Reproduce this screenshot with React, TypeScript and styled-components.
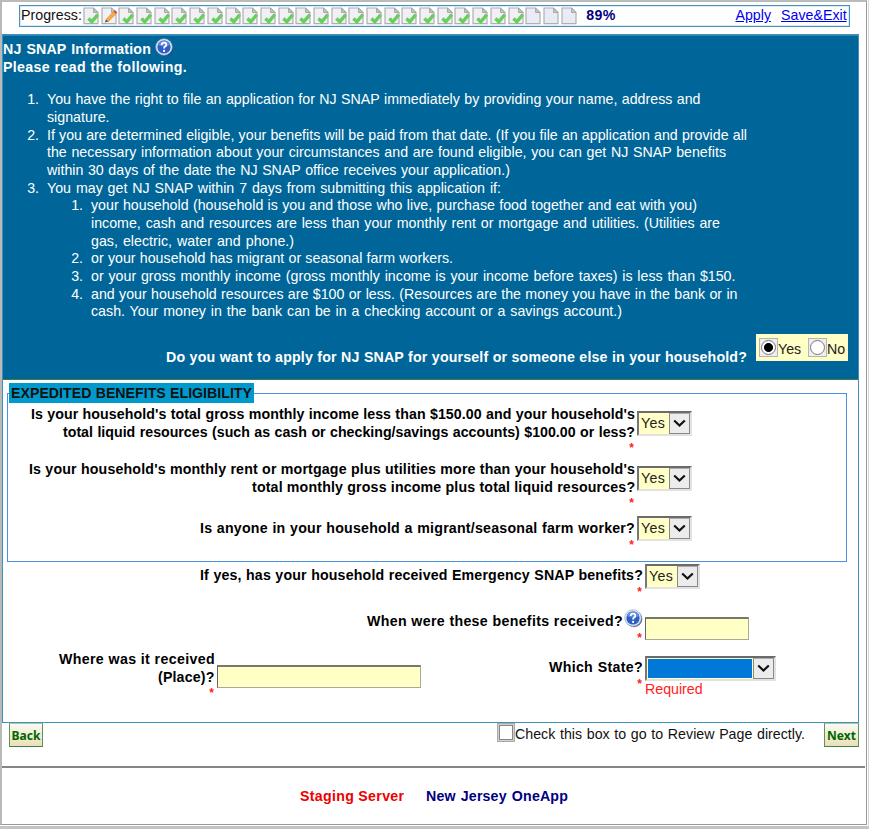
import React from "react";
import styled, { createGlobalStyle } from "styled-components";

const GlobalStyle = createGlobalStyle`
  * { box-sizing: border-box; }
  body { margin: 0; background: #fff; font-family: "Liberation Sans", Arial, sans-serif; font-size: 14.2px; line-height: 17.67px; color: #111; }
`;

const Page = styled.div`
  width: 869px;
  height: 829px;
  padding-bottom: 2px;
  border-bottom: 3px solid #c4c4c4;
  border-right: 1px solid #d8d8d8;
  background: #fff;
`;

const Frame = styled.div`
  height: 825px;
  width: 867px;
  border: 1px solid #999;
  border-left: 2px solid #b9b9b9;
  border-top: 2px solid #bbb;
  display: flex;
  flex-direction: column;
`;

const ProgressBar = styled.div`
  margin: 3px 0 0 17px;
  width: 831px;
  height: 22px;
  padding-left: 1px;
  border: 1px solid #4695bd;
  outline: 1px solid #dcebf2;
  outline-offset: -2px;
  display: flex;
  align-items: center;
  flex: none;
`;

const Steps = styled.div`
  display: flex;
  margin-left: 1px;
`;

const StepIcon = styled.svg`
  width: 17.7px;
  height: 18px;
  flex: none;
`;

const Percent = styled.b`
  margin-left: 8px;
  color: #000080;
  letter-spacing: 0.3px;
`;

const Links = styled.div`
  display: flex;
  gap: 10px;
  margin-left: auto;
  padding-right: 2px;
`;

const Link = styled.a`
  color: #0000f0;
  text-decoration: underline;
  text-underline-offset: 1px;
`;

const Line = styled.div<{ $w: number; $bold?: boolean; $ls?: number }>`
  width: ${(p) => p.$w}px;
  white-space: nowrap;
  text-align: justify;
  text-align-last: justify;
  letter-spacing: ${(p) => p.$ls ?? (p.$bold ? 0.16 : 0.02)}px;
  font-weight: ${(p) => (p.$bold ? 700 : 400)};
`;

const Panel = styled.main`
  margin-top: 7px;
  width: 857px;
  height: 689px;
  border: 1px solid #3f92bd;
  flex: none;
`;

const Info = styled.section`
  height: 345px;
  background: #006699;
  border-bottom: 1px solid #3f7d3f;
  border-top: 1px solid #2f83ae;
  color: #fff;
  padding-top: 4px;
`;

const HeadRow = styled.div`
  display: flex;
  gap: 4px;
  height: 19px;
  padding-top: 1px;
`;

const HelpIcon = styled.svg<{ $up: number }>`
  width: 19px;
  height: 19px;
  flex: none;
  margin-top: ${(p) => -p.$up}px;
`;

const List = styled.ol<{ $nested?: boolean }>`
  margin: ${(p) => (p.$nested ? "0" : "14.7px 0 0")};
  padding: 0 0 0 44px;
  list-style: none;
`;

const Item = styled.li`
  display: grid;
  grid-template-columns: 44px 1fr;
  margin-left: -44px;
`;

const Num = styled.span`
  text-align: right;
  padding-right: 8px;
`;

const AskRow = styled.div`
  display: flex;
  margin: 13px 0 0 163px;
`;

const AskText = styled.div`
  padding-top: 15px;
`;

const Choices = styled.div`
  margin-left: 9px;
  width: 92px;
  height: 27px;
  background: #ffffc6;
  display: flex;
  align-items: center;
  padding-left: 3px;
  color: #222;
`;

const RadioBox = styled.span`
  width: 19px;
  height: 19px;
  border: 1px solid #b4b4b4;
  background: #eee;
  display: flex;
  align-items: center;
  justify-content: center;
  flex: none;
`;

const Dot = styled.span<{ $on?: boolean }>`
  width: 15px;
  height: 15px;
  border-radius: 50%;
  border: 1px solid #777;
  background: ${(p) => (p.$on ? "radial-gradient(circle, #000 0 4px, #fff 5px)" : "#fff")};
`;

const ChoiceText = styled.span<{ $w: number }>`
  width: ${(p) => p.$w}px;
  padding-top: 4px;
`;

const Group = styled.fieldset`
  margin: 3px 0 0 4px;
  width: 840px;
  height: 179px;
  padding: 0;
  border: 1px solid #4a90e2;
  min-width: 0;
`;

const Legend = styled.legend`
  margin-left: 1px;
  padding: 0 2px;
  width: 245px;
  height: 20px;
  line-height: 21px;
  background: #0099cc;
  color: #111;
`;

const Row = styled.div<{ $h: number; $label: number }>`
  height: ${(p) => p.$h}px;
  display: grid;
  grid-template-columns: ${(p) => p.$label}px 1fr;
  column-gap: 2px;
`;

const Label = styled.div<{ $top: number }>`
  display: flex;
  flex-direction: column;
  align-items: flex-end;
  padding-top: ${(p) => p.$top}px;
  color: #000;
`;

const WithHelp = styled.div`
  display: flex;
  gap: 1px;
`;

const Star = styled.span`
  color: #f22;
  font-size: 12px;
  font-weight: 700;
  line-height: 14px;
  height: 14px;
  padding-right: 1px;
`;

const Control = styled.div<{ $top: number }>`
  padding-top: ${(p) => p.$top}px;
`;

const Select = styled.div<{ $w: number }>`
  width: ${(p) => p.$w}px;
  height: 25px;
  border-style: solid;
  border-width: 2px;
  border-color: #6b6b6b #e2e2e2 #e2e2e2 #777;
  background: #ffffc6;
  display: flex;
`;

const Value = styled.span<{ $blue?: boolean }>`
  flex: 1;
  padding: 2px 0 0 2px;
  letter-spacing: 0.4px;
  color: #222;
  margin: ${(p) => (p.$blue ? "1px 1px 1px 1px" : "0")};
  background: ${(p) => (p.$blue ? "#0078d7" : "transparent")};
`;

const Arrow = styled.span`
  width: 21px;
  height: 21px;
  border: 1px solid #888;
  border-top-color: #aaa;
  background: #ececec;
  display: flex;
  align-items: center;
  justify-content: center;
`;

const Input = styled.input<{ $w: number }>`
  display: block;
  width: ${(p) => p.$w}px;
  height: 23px;
  border: 1px solid #aaa896;
  border-top: 2px solid #77776a;
  border-left-color: #666;
  background: #ffffc6;
  outline: none;
`;

const LastRow = styled.div`
  display: grid;
  grid-template-columns: 212px 213px 211px 1fr;
  column-gap: 2px;
`;

const Required = styled.div`
  color: #f22;
`;

const Nav = styled.div`
  display: flex;
  height: 43px;
  padding-left: 7px;
  flex: none;
`;

const NavButton = styled.button<{ $w: number }>`
  width: ${(p) => p.$w}px;
  height: 24px;
  padding: 0;
  border: 1px solid #5c945c;
  border-top-color: #a9c7a9;
  border-bottom-color: #438043;
  background: linear-gradient(#fafaf2, #eadfb8);
  color: #006600;
  font: 700 12px "Noto Sans", sans-serif;
  white-space: nowrap;
`;

const Review = styled.label`
  margin-left: 454px;
  width: 327px;
  display: flex;
`;

const Check = styled.span`
  width: 18px;
  height: 19px;
  border: 2px solid #d0d0d0;
  background: #fff;
  box-shadow: inset 0 0 0 1px #888;
  outline: 1px solid #aaa;
  outline-offset: -1px;
`;

const ReviewText = styled.div`
  padding-top: 3px;
`;

const Rule = styled.div`
  height: 2px;
  margin-right: 1px;
  background: #858585;
`;

const Footer = styled.footer`
  display: flex;
  gap: 22px;
  padding: 20px 0 0 298px;
`;

const Tinted = styled.div<{ $c: string }>`
  color: ${(p) => p.$c};
`;

function Step({ kind }: { kind: "done" | "edit" | "blank" }) {
  return (
    <StepIcon viewBox="0 0 17.7 18">
      <path d="M1 1H10.5L15 5.5V16.7H1Z" fill={kind === "blank" ? "#e9ecf6" : "#f0f0f5"} stroke="#b0b0b0" strokeWidth="1.2" />
      <path d="M10.5 1V5.5H15Z" fill="#c4c4c4" stroke="#aaa" />
      {kind === "done" && <path d="M5.4 11.6 8.8 14.8 14.8 7.6" fill="none" stroke="#68cf5c" strokeWidth="3.4" />}
      {kind === "edit" && (
        <>
          <path d="M5 12.5 12.5 4.5 15 7 7.5 14.5Z" fill="#f4ac45" stroke="#d58b35" strokeWidth=".5" />
          <path d="M12.5 4.5 13.8 3 16.2 5.2 15 7Z" fill="#c94c4c" />
          <path d="M5 12.5 3.8 15.4 7.5 14.5Z" fill="#555" />
        </>
      )}
    </StepIcon>
  );
}

function Help({ up }: { up: number }) {
  return (
    <HelpIcon $up={up} viewBox="0 0 19 19">
      <circle cx="10" cy="10" r="8.3" fill="#273c5e" opacity=".75" />
      <circle cx="9" cy="9" r="8.3" fill="#dbe5f6" stroke="#8ea5ca" strokeWidth=".6" />
      <circle cx="9" cy="9" r="6.6" fill="#2d5fc4" />
      <path d="M3 7A6.3 6.3 0 0 1 15 7Q9 10 3 7Z" fill="#638ade" />
      <path d="M6.6 7Q6.8 4.6 9.1 4.7 11.5 4.8 11.3 6.8 11.2 7.9 9.8 8.8 9.1 9.3 9.1 10.6" fill="none" stroke="#fff" strokeWidth="1.8" />
      <circle cx="9.1" cy="12.9" r="1.1" fill="#fff" />
    </HelpIcon>
  );
}

function Drop({ w, value }: { w: number; value?: string }) {
  return (
    <Select $w={w}>
      <Value $blue={!value}>{value}</Value>
      <Arrow>
        <svg width="13" height="9" viewBox="0 0 13 9">
          <path d="M1.2 1.5 6.5 6.5 11.8 1.5" fill="none" stroke="#111" strokeWidth="2.2" />
        </svg>
      </Arrow>
    </Select>
  );
}

const steps = Array.from({ length: 28 }, (_, i) => (i === 1 ? "edit" : i > 24 ? "blank" : "done") as "done" | "edit" | "blank");

type Entry = [string, number][];

const rights: Entry[] = [
  [["You have the right to file an application for NJ SNAP immediately by providing your name, address and", 653.5], ["signature.", 62]],
  [
    ["If you are determined eligible, your benefits will be paid from that date. (If you file an application and provide all", 700],
    ["the necessary information about your circumstances and are found eligible, you can get NJ SNAP benefits", 679],
    ["within 30 days of the date the NJ SNAP office receives your application.)", 463],
  ],
  [["You may get NJ SNAP within 7 days from submitting this application if:", 454]],
];

const conditions: Entry[] = [
  [
    ["your household (household is you and those who live, purchase food together and eat with you)", 606],
    ["income, cash and resources are less than your monthly rent or mortgage and utilities. (Utilities are", 629],
    ["gas, electric, water and phone.)", 203],
  ],
  [["or your household has migrant or seasonal farm workers.", 362]],
  [["or your gross monthly income (gross monthly income is your income before taxes) is less than $150.", 644.5]],
  [
    ["and your household resources are $100 or less. (Resources are the money you have in the bank or in", 646.5],
    ["cash. Your money in the bank can be in a checking account or a savings account.)", 531],
  ],
];

function Entries({ items, nested, children }: { items: Entry[]; nested?: boolean; children?: React.ReactNode }) {
  return (
    <List $nested={nested}>
      {items.map((lines, i) => (
        <Item key={i}>
          <Num>{i + 1}.</Num>
          <div>
            {lines.map(([t, w]) => (
              <Line key={t} $w={w}>{t}</Line>
            ))}
            {i === items.length - 1 && children}
          </div>
        </Item>
      ))}
    </List>
  );
}

export default function App() {
  return (
    <>
      <GlobalStyle />
      <Page>
        <Frame>
          <ProgressBar>
            <Line $w={61}>Progress:</Line>
            <Steps>
              {steps.map((k, i) => (
                <Step key={i} kind={k} />
              ))}
            </Steps>
            <Percent>89%</Percent>
            <Links>
              <Link>Apply</Link>
              <Link>
                <Line $w={66}>Save&amp;Exit</Line>
              </Link>
            </Links>
          </ProgressBar>
          <Panel>
            <Info>
              <HeadRow>
                <Line $bold $w={148}>NJ SNAP Information</Line>
                <Help up={3} />
              </HeadRow>
              <Line $bold $ls={0.35} $w={184}>Please read the following.</Line>
              <Entries items={rights}>
                <Entries items={conditions} nested />
              </Entries>
              <AskRow>
                <AskText>
                  <Line $bold $w={581}>Do you want to apply for NJ SNAP for yourself or someone else in your household?</Line>
                </AskText>
                <Choices>
                  <RadioBox><Dot $on /></RadioBox>
                  <ChoiceText $w={30}>Yes</ChoiceText>
                  <RadioBox><Dot /></RadioBox>
                  <ChoiceText $w={20}>No</ChoiceText>
                </Choices>
              </AskRow>
            </Info>
            <Group>
              <Legend>
                <Line $bold $ls={0} $w={241}>EXPEDITED BENEFITS ELIGIBILITY</Line>
              </Legend>
              <Row $h={55} $label={627}>
                <Label $top={3}>
                  <Line $bold $ls={0.08} $w={604}>Is your household's total gross monthly income less than $150.00 and your household's</Line>
                  <Line $bold $ls={0} $w={572}>total liquid resources (such as cash or checking/savings accounts) $100.00 or less?</Line>
                  <Star>*</Star>
                </Label>
                <Control $top={8}><Drop w={55} value="Yes" /></Control>
              </Row>
              <Row $h={50} $label={627}>
                <Label $top={3}>
                  <Line $bold $w={606}>Is your household's monthly rent or mortgage plus utilities more than your household's</Line>
                  <Line $bold $w={383}>total monthly gross income plus total liquid resources?</Line>
                  <Star>*</Star>
                </Label>
                <Control $top={8}><Drop w={55} value="Yes" /></Control>
              </Row>
              <Row $h={53} $label={627}>
                <Label $top={12}>
                  <Line $bold $ls={0.22} $w={435}>Is anyone in your household a migrant/seasonal farm worker?</Line>
                  <Star>*</Star>
                </Label>
                <Control $top={8}><Drop w={55} value="Yes" /></Control>
              </Row>
            </Group>
            <Row $h={44} $label={640}>
              <Label $top={5}>
                <Line $bold $w={443}>If yes, has your household received Emergency SNAP benefits?</Line>
                <Star>*</Star>
              </Label>
              <Control $top={2}><Drop w={55} value="Yes" /></Control>
            </Row>
            <Row $h={44} $label={640}>
              <Label $top={7}>
                <WithHelp>
                  <Line $bold $ls={0.32} $w={256}>When were these benefits received?</Line>
                  <Help up={4} />
                </WithHelp>
                <Star>*</Star>
              </Label>
              <Control $top={11}><Input $w={104} /></Control>
            </Row>
            <LastRow>
              <Label $top={1}>
                <Line $bold $ls={0.35} $w={156}>Where was it received</Line>
                <Line $bold $w={57}>(Place)?</Line>
                <Star>*</Star>
              </Label>
              <Control $top={15}><Input $w={204} /></Control>
              <Label $top={9}>
                <Line $bold $ls={0.3} $w={94}>Which State?</Line>
                <Star>*</Star>
              </Label>
              <Control $top={6}>
                <Drop w={131} />
                <Required>Required</Required>
              </Control>
            </LastRow>
          </Panel>
          <Nav>
            <NavButton $w={34}>Back</NavButton>
            <Review>
              <Check />
              <ReviewText><Line $w={290}>Check this box to go to Review Page directly.</Line></ReviewText>
            </Review>
            <NavButton $w={35}>Next</NavButton>
          </Nav>
          <Rule />
          <Footer>
            <Tinted $c="#ee0000"><Line $bold $ls={0.3} $w={104}>Staging Server</Line></Tinted>
            <Tinted $c="#000080"><Line $bold $w={142}>New Jersey OneApp</Line></Tinted>
          </Footer>
        </Frame>
      </Page>
    </>
  );
}
